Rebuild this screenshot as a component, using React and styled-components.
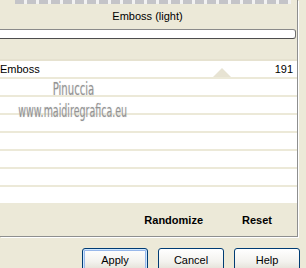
import React from "react";
import styled, { createGlobalStyle } from "styled-components";

const Global = createGlobalStyle`
  html, body { margin: 0; padding: 0; background: #ECE9D8; }
  body { font-family: "Liberation Sans", Arial, sans-serif; font-size: 11px; color: #000; overflow: hidden; }
`;

const Window = styled.div`
  width: 306px;
  height: 268px;
  background: #ECE9D8;
  overflow: hidden;
  display: flex;
  flex-direction: column;
`;

const Panel = styled.div`
  position: relative;
  width: 297px;
  border-right: 1px solid #8e8f8f;
  border-bottom: 1px solid #8e8f8f;
  box-shadow: 1px 1px 0 #ffffff;
  display: flex;
  flex-direction: column;
`;

const TopStrip = styled.div`
  height: 4px;
  margin-left: 15px;
  margin-right: 6px;
  background: repeating-linear-gradient(90deg, #c4c4c8 0 9px, #f2f2f2 9px 12px);
`;

const Title = styled.div`
  height: 24px;
  line-height: 24px;
  text-align: center;
  padding-right: 2px;
`;

const Bar = styled.div`
  height: 8px;
  margin: 1px 1px 0 -6px;
  background: #ffffff;
  border: 1px solid #6f6f6f;
  border-top-color: #8a8a8a;
  border-bottom-color: #4d4d4d;
  border-radius: 0 3px 3px 0;
`;

const List = styled.div`
  position: relative;
  margin-top: 20px;
  background: #ECE9D8;
  border-top: 2px solid #E6E2D0;
  display: flex;
  flex-direction: column;
  gap: 2px;
`;

const Row = styled.div`
  position: relative;
  height: 16px;
  background: #ffffff;
  display: flex;
  align-items: center;
  justify-content: space-between;
  padding-right: 4px;
  line-height: 16px;
`;

const Name = styled.span``;
const Value = styled.span``;

const Tick = styled.div`
  position: absolute;
  left: 213px;
  bottom: 0;
  width: 0;
  height: 0;
  border-left: 9px solid transparent;
  border-right: 9px solid transparent;
  border-bottom: 9px solid #E7E3D3;
`;

const Watermark = styled.div`
  position: absolute;
  left: 0;
  top: 17px;
  width: 146px;
  display: flex;
  flex-direction: column;
  align-items: center;
  font-family: "DejaVu Sans Condensed", "DejaVu Sans", sans-serif;
  font-weight: 300;
  color: #939393;
  text-shadow: 0 0 2px #d8d8d8;
  pointer-events: none;
`;

const WmLine = styled.span`
  display: inline-block;
  font-size: ${(p) => p.$size}px;
  line-height: ${(p) => p.$lh}px;
  transform: scaleX(${(p) => p.$sx});
  white-space: nowrap;
`;

const Footer = styled.div`
  height: 33px;
  display: flex;
  align-items: center;
  justify-content: flex-end;
  gap: 39px;
  padding-right: 25px;
`;

const FooterButton = styled.span`
  font-weight: bold;
`;

const ButtonRow = styled.div`
  display: flex;
  justify-content: flex-end;
  gap: 10px;
  padding: 11px 6px 0 0;
`;

const Button = styled.div`
  box-sizing: border-box;
  width: 66px;
  height: 23px;
  border: 1px solid #003C74;
  border-radius: 3px;
  background: linear-gradient(#ffffff 0%, #f3f2ee 60%, #e3e0d6 100%);
  box-shadow: ${(p) =>
    p.$default ? "inset 0 0 0 1px #cee7ff, inset 0 0 0 2px #98b8ea" : "inset 0 -1px 0 #d6d0c5"};
  display: flex;
  align-items: center;
  justify-content: center;
`;

export default function App() {
  const rows = Array.from({ length: 7 });
  return (
    <>
      <Global />
      <Window>
        <Panel>
          <TopStrip />
          <Title>Emboss (light)</Title>
          <Bar />
          <List>
            <Row>
              <Name>Emboss</Name>
              <Value>191</Value>
              <Tick />
            </Row>
            {rows.map((_, i) => (
              <Row key={i} />
            ))}
            <Watermark>
              <WmLine $size={17} $lh={22} $sx={0.66}>Pinuccia</WmLine>
              <WmLine $size={17} $lh={22} $sx={0.62}>www.maidiregrafica.eu</WmLine>
            </Watermark>
          </List>
          <Footer>
            <FooterButton>Randomize</FooterButton>
            <FooterButton>Reset</FooterButton>
          </Footer>
        </Panel>
        <ButtonRow>
          <Button $default>Apply</Button>
          <Button>Cancel</Button>
          <Button>Help</Button>
        </ButtonRow>
      </Window>
    </>
  );
}
